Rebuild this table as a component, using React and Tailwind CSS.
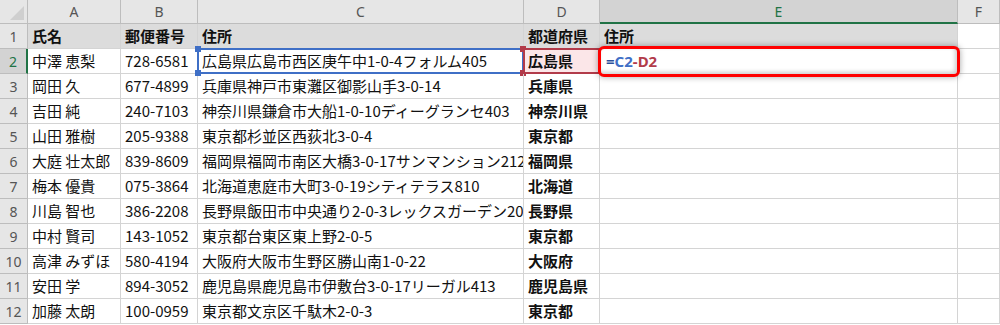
import React from 'react';

const cols = ['A', 'B', 'C', 'D', 'E', 'F'];

const rows = [
  ['中澤 恵梨', '728-6581', '広島県広島市西区庚午中1-0-4フォルム405', '広島県'],
  ['岡田 久', '677-4899', '兵庫県神戸市東灘区御影山手3-0-14', '兵庫県'],
  ['吉田 純', '240-7103', '神奈川県鎌倉市大船1-0-10ディーグランセ403', '神奈川県'],
  ['山田 雅樹', '205-9388', '東京都杉並区西荻北3-0-4', '東京都'],
  ['大庭 壮太郎', '839-8609', '福岡県福岡市南区大橋3-0-17サンマンション212', '福岡県'],
  ['梅本 優貴', '075-3864', '北海道恵庭市大町3-0-19シティテラス810', '北海道'],
  ['川島 智也', '386-2208', '長野県飯田市中央通り2-0-3レックスガーデン203', '長野県'],
  ['中村 賢司', '143-1052', '東京都台東区東上野2-0-5', '東京都'],
  ['高津 みずほ', '580-4194', '大阪府大阪市生野区勝山南1-0-22', '大阪府'],
  ['安田 学', '894-3052', '鹿児島県鹿児島市伊敷台3-0-17リーガル413', '鹿児島県'],
  ['加藤 太朗', '100-0959', '東京都文京区千駄木2-0-3', '東京都'],
];

const grid = 'grid grid-cols-[28px_93px_77px_326px_76px_358px_1fr]';
const cell = 'h-[25px] border-r border-b border-[#d4d4d4] px-[4px] flex items-center overflow-hidden whitespace-nowrap';

function Handle({ className }) {
  return <span className={`absolute w-[6px] h-[6px] ${className}`} />;
}

export default function App() {
  return (
    <div
      className="relative w-[1000px] h-[325px] overflow-hidden bg-white text-[15px] text-[#111]"
      style={{ fontFamily: '"Noto Sans CJK JP", "Noto Sans", sans-serif' }}
    >
      {/* column headers */}
      <div className={`${grid} h-[24px]`}>
        <div className="relative bg-[#e6e6e6] border-r border-b border-[#bdbdbd]">
          <div className="absolute right-[3px] bottom-[3px] w-0 h-0 border-l-[14px] border-l-transparent border-b-[14px] border-b-[#cfcfcf]" />
        </div>
        {cols.map((c) => (
          <div
            key={c}
            className={
              c === 'E'
                ? 'flex items-center justify-center bg-[#d3d3d3] border-r border-b-2 border-r-[#bdbdbd] border-b-[#217346] text-[#217346] text-[14px]'
                : 'flex items-center justify-center bg-[#e6e6e6] border-r border-b border-[#bdbdbd] text-[#555] text-[14px]'
            }
            style={{ fontFamily: '"Noto Sans", sans-serif' }}
          >
            {c}
          </div>
        ))}
      </div>

      {/* row 1: table header */}
      <div className={grid}>
        <div className="h-[25px] flex items-center justify-center bg-[#e6e6e6] border-r border-b border-[#bdbdbd] text-[#555] text-[14px]" style={{ fontFamily: '"Noto Sans", sans-serif' }}>1</div>
        {['氏名', '郵便番号', '住所', '都道府県', '住所'].map((t, i) => (
          <div key={i} className={`${cell} bg-[#dcdcdc] font-bold`}>{t}</div>
        ))}
        <div className={cell} />
      </div>

      {rows.map((r, i) => {
        const n = i + 2;
        const sel = n === 2;
        return (
          <div key={n} className={grid}>
            <div
              className={
                sel
                  ? 'h-[25px] flex items-center justify-center bg-[#d3d3d3] border-r-2 border-b border-r-[#217346] border-b-[#bdbdbd] text-[#217346] text-[14px]'
                  : 'h-[25px] flex items-center justify-center bg-[#e6e6e6] border-r border-b border-[#bdbdbd] text-[#555] text-[14px]'
              }
              style={{ fontFamily: '"Noto Sans", sans-serif' }}
            >
              {n}
            </div>
            <div className={cell}>{r[0]}</div>
            <div className={cell}>{r[1]}</div>
            <div className={`${cell} relative ${sel ? 'overflow-visible' : ''}`}>
              {sel && (
                <>
                  <div className="absolute inset-[-1px] border-2 border-[#3f6fc6] pointer-events-none" />
                  <Handle className="left-[-3px] top-[-3px] bg-[#3f6fc6]" />
                  <Handle className="left-[-3px] bottom-[-3px] bg-[#3f6fc6]" />
                  <Handle className="right-[-3px] top-[-3px] bg-[#b23b4a]" />
                  <Handle className="right-[-3px] bottom-[-3px] bg-[#b23b4a]" />
                </>
              )}
              <span className="relative">{r[2]}</span>
            </div>
            <div className={`${cell} relative font-bold ${sel ? 'bg-[#fbe6e8] overflow-visible' : ''}`}>
              {sel && <div className="absolute inset-[-1px] border-2 border-[#b23b4a] pointer-events-none" />}
              <span className="relative">{r[3]}</span>
            </div>
            <div className={cell} />
            <div className={cell} />
          </div>
        );
      })}

      {/* editing cell E2 with red annotation */}
      <div
        className="absolute left-[598px] top-[46px] w-[362px] h-[31px] rounded-[6px] border-[3px] border-[#ff0000] bg-white shadow-[0_0_6px_rgba(0,0,0,0.35),inset_-2px_-2px_4px_rgba(0,0,0,0.2)] flex items-center pl-[5px] font-bold text-[15px]"
        style={{ fontFamily: '"Noto Sans", sans-serif' }}
      >
        <span className="text-[#2a4f9a]">=</span>
        <span className="text-[#3f6fc6]">C2</span>
        <span className="text-[#b23b4a]">-</span>
        <span className="text-[#b23b4a]">D2</span>
      </div>
    </div>
  );
}
